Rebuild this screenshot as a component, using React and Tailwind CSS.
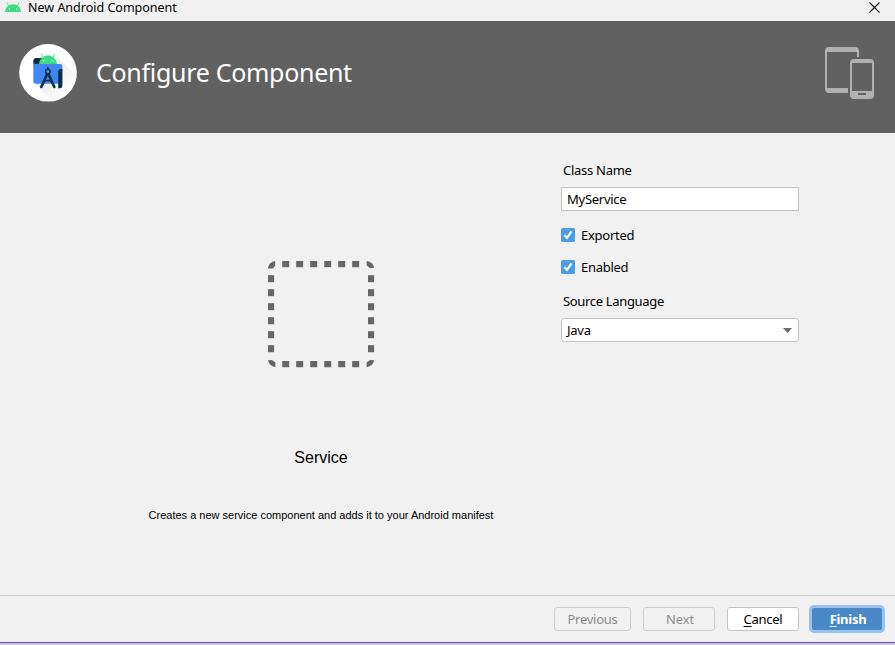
import React from "react";

function AndroidHead() {
  return (
    <svg className="h-[11px] w-4 shrink-0" viewBox="0 0 16 11">
      <path d="M0 10a8 7.8 0 0 1 16 0z" fill="#3ddc84" />
      <path d="M3.8 4.2 2 0.6M12.2 4.2 14 0.6" stroke="#3ddc84" strokeWidth="0.9" strokeLinecap="round" />
      <circle cx="4.3" cy="7" r="0.7" fill="#f0f0f0" />
      <circle cx="11.7" cy="7" r="0.7" fill="#f0f0f0" />
    </svg>
  );
}

function StudioLogo() {
  return (
    <svg className="h-[58px] w-[58px] shrink-0" viewBox="0 0 58 58">
      <defs>
        <linearGradient id="shade" x1="0.2" y1="0.2" x2="0.8" y2="0.8">
          <stop offset="0" stopColor="#e6e6e6" />
          <stop offset="1" stopColor="#ffffff" />
        </linearGradient>
        <clipPath id="disc">
          <circle cx="29" cy="28.8" r="28.8" />
        </clipPath>
      </defs>
      <circle cx="29" cy="28.8" r="28.8" fill="#fff" />
      <path d="M38 13 60 34V60H36L16 40 40 40z" fill="url(#shade)" clipPath="url(#disc)" />
      <path d="M14.3 21V17.2Q14.3 14 17.5 14H24V21z" fill="#073042" />
      <path d="M20 20.3a9 9 0 0 1 18 0z" fill="#3ddc84" />
      <path d="M24 13.5 22.6 10M34 13.5 35.6 10" stroke="#3ddc84" strokeWidth="0.9" strokeLinecap="round" />
      <circle cx="24.8" cy="16.7" r="0.7" fill="#fff" />
      <circle cx="33.4" cy="16.7" r="0.7" fill="#fff" />
      <path d="M14.3 17.5Q14.8 20 17 20H41.2Q43.3 20 43.3 22V39.8H17Q14.3 39.8 14.3 37z" fill="#4285f4" />
      <path d="M39.2 44.3V27.5Q39.2 25 41.5 25H43.3V42Q43.3 44.3 41 44.3z" fill="#073042" />
      <path d="M28.8 24.5V23.5" stroke="#073042" strokeWidth="1.6" strokeLinecap="round" />
      <path d="M27.9 30.5 22.3 43M29.7 30.5 35.3 43" stroke="#073042" strokeWidth="2.6" strokeLinecap="round" />
      <path d="M25 37.6Q28.8 35.4 32.6 37.6" stroke="#073042" strokeWidth="1.4" fill="none" />
      <circle cx="28.8" cy="27.4" r="2.3" fill="#4285f4" stroke="#073042" strokeWidth="1.4" />
    </svg>
  );
}

function DevicesIcon() {
  return (
    <svg className="h-[53px] w-[50px] shrink-0" viewBox="0 0 50 53">
      <path
        fill="#afb1b3"
        fillRule="evenodd"
        d="M4 0H30Q34 0 34 4V10H32V5H2V41H23V46H4Q0 46 0 42V4Q0 0 4 0z"
      />
      <path
        fill="#afb1b3"
        fillRule="evenodd"
        d="M29 12H45Q49 12 49 16V48Q49 52 45 52H29Q25 52 25 48V16Q25 12 29 12zM27 16V44H47V16zM33 46V48H41V46z"
      />
    </svg>
  );
}

const dashes = [14, 28, 42, 56, 70, 84];

function ServiceOutline() {
  return (
    <svg className="h-[107px] w-[107px]" viewBox="0 0 107 107" fill="#666">
      {dashes.map((d) => (
        <g key={d}>
          <rect x={d + 0.2} y="0" width="7" height="6.2" />
          <rect x={d + 0.2} y="100" width="7" height="6.2" />
          <rect x="0" y={d + 0.2} width="6.1" height="7" />
          <rect x="100" y={d + 0.2} width="6.1" height="7" />
        </g>
      ))}
      <path d="M0 6.8Q1.2 1.2 7.2 0V4.6L4.8 7.4H0z" />
      <path d="M106.2 6.8Q105 1.2 98.6 0V4.2L102 7.2z" />
      <path d="M0 99.2Q1.2 104.8 7.4 106.2V101.6L4 99z" />
      <path d="M106.2 99.2Q105 104.8 98.6 106.2V101.6L102 99z" />
    </svg>
  );
}

function CheckRow({ children, className }) {
  return (
    <div className={"flex h-[18px] items-center gap-1.5 " + className}>
      <svg className="h-3.5 w-3.5" viewBox="0 0 14 14">
        <rect width="14" height="14" rx="1.5" fill="#4d9de3" />
        <path d="M3.4 7.3 6 9.9 10.5 3.4" stroke="#fff" strokeWidth="2" fill="none" />
      </svg>
      {children}
    </div>
  );
}

export default function App() {
  return (
    <div className="flex h-[645px] w-[895px] flex-col overflow-hidden bg-[#f1f1f1] font-['Noto_Sans','Open_Sans',sans-serif] text-[13px] leading-[18px] tracking-[-0.27px] text-black">
      <div className="flex h-[21px] shrink-0 items-start pl-[5px] pr-[15px]">
        <div className="mt-0.5">
          <AndroidHead />
        </div>
        <span className="ml-[7px] -mt-px text-[12.5px] tracking-[0px]">New Android Component</span>
        <svg className="ml-auto mt-0.5 h-[11px] w-[11px]" viewBox="0 0 11 11">
          <path d="M0.5 0.5 10.5 10.5M10.5 0.5 0.5 10.5" stroke="#111" strokeWidth="1.1" />
        </svg>
      </div>

      <header className="flex h-28 shrink-0 items-start bg-[#616161] pl-[19px] pr-5 text-white">
        <div className="mt-[23px]">
          <StudioLogo />
        </div>
        <h1 className="ml-[19px] mt-[33px] text-[25px] leading-[36px] tracking-[-0.3px]">Configure Component</h1>
        <div className="ml-auto mt-[26px]">
          <DevicesIcon />
        </div>
      </header>

      <main className="flex h-[462px] shrink-0">
        <section className="flex w-[561px] flex-col items-center pl-[81px] pt-32 font-['Liberation_Sans',Arial,sans-serif] tracking-normal">
          <ServiceOutline />
          <h2 className="mt-[79px] text-[16px] leading-[22px]">Service</h2>
          <p className="mt-[37px] whitespace-nowrap text-[11px] leading-[18px]">
            Creates a new service component and adds it to your Android manifest
          </p>
        </section>

        <section className="w-[238px] pt-7">
          <div className="pl-0.5">Class Name</div>
          <div className="mt-2 flex h-6 items-center border border-[#c4c4c4] bg-white pb-px pl-[5px]">MyService</div>
          <CheckRow className="mt-[15px]">Exported</CheckRow>
          <CheckRow className="mt-3.5">Enabled</CheckRow>
          <div className="mt-4 pl-0.5 tracking-[-0.33px]">Source Language</div>
          <div className="mt-2 flex h-6 items-center justify-between rounded-[3px] border border-[#c4c4c4] bg-white pl-[5px] pr-1.5">
            Java
            <svg className="h-[5px] w-[9px]" viewBox="0 0 9 5">
              <path d="M0 0H9L4.5 5z" fill="#6e6e6e" />
            </svg>
          </div>
        </section>
      </main>

      <footer className="flex h-[47px] shrink-0 items-start border-t border-[#d0d0d0] pl-[554px] pt-[11px]">
        <div className="flex h-6 w-[77px] items-center justify-center rounded-[3px] border border-[#cfcfcf] text-[#8c8c8c]">Previous</div>
        <div className="ml-3 flex h-6 w-[72px] items-center justify-center rounded-[3px] border border-[#cfcfcf] pl-0.5 tracking-[-0.1px] text-[#8c8c8c]">Next</div>
        <div className="ml-3 flex h-6 w-[72px] items-center justify-center rounded-[3px] border border-[#c4c4c4] bg-white">
          <span className="underline underline-offset-2">C</span>ancel
        </div>
        <div className="-mt-0.5 ml-2.5 flex h-7 w-[76px] items-center justify-center rounded-[5px] border-[3px] border-[#97c3f3] bg-[#4a88c7] pl-0.5 font-bold text-white">
          <span className="underline underline-offset-2">F</span>inish
        </div>
      </footer>
      <div className="h-px shrink-0 bg-[#6f3fd0]" />
      <div className="h-0.5 shrink-0 bg-[#c8c8c8]" />
    </div>
  );
}
